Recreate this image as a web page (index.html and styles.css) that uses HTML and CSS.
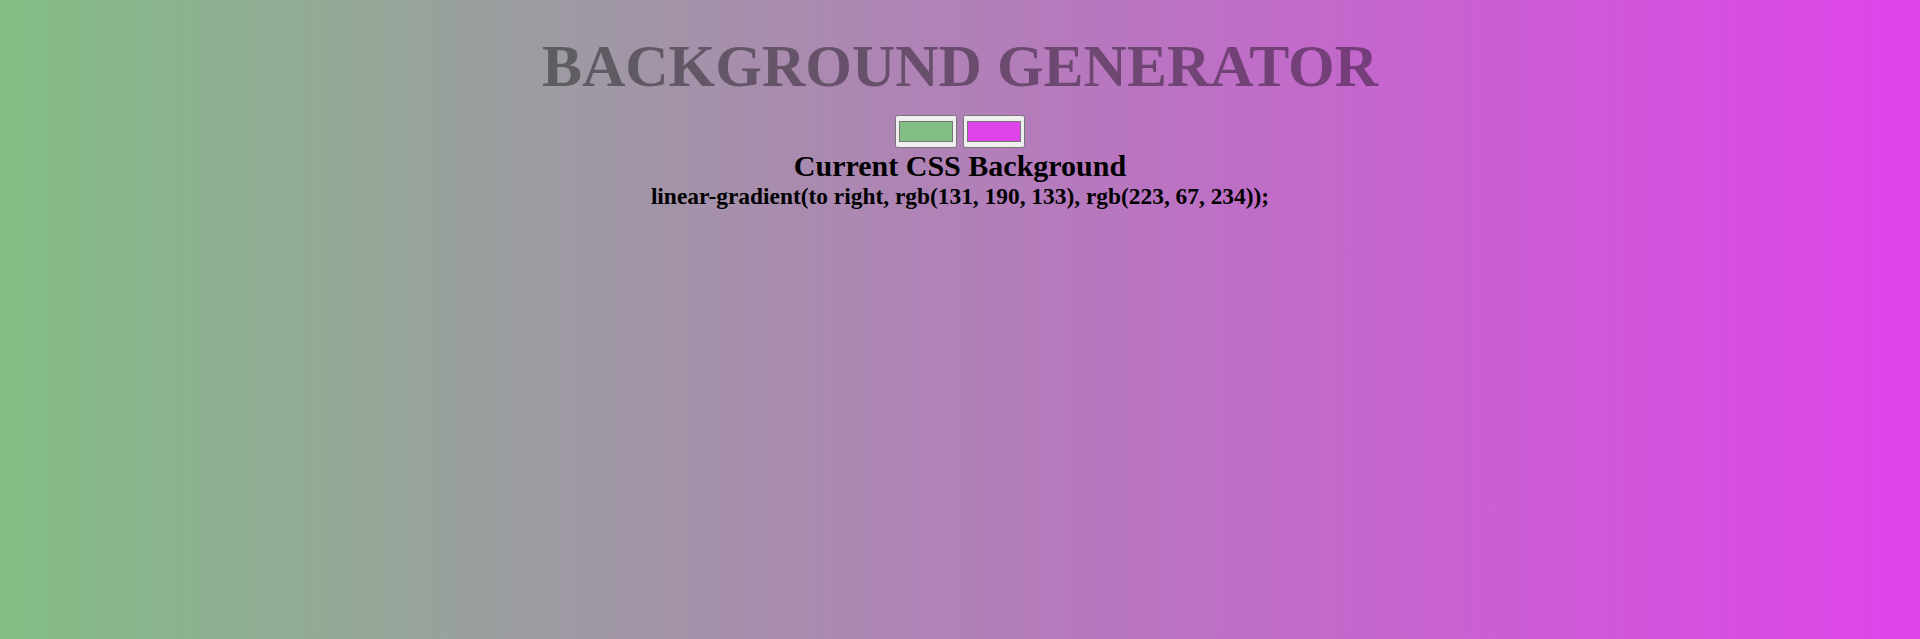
FILE: index.html
```html
<!DOCTYPE html>
<html lang="en">
<head>
<meta charset="utf-8">
<title>Background Generator</title>
<link rel="stylesheet" href="styles.css">
</head>
<body>
  <h1 class="title">BACKGROUND GENERATOR</h1>
  <div class="pickers">
    <input class="color1" type="color" name="color1" value="#83be85">
    <input class="color2" type="color" name="color2" value="#df43ea">
  </div>
  <h2 class="subtitle">Current CSS Background</h2>
  <h3 class="css-text">linear-gradient(to right, rgb(131, 190, 133), rgb(223, 67, 234));</h3>
</body>
</html>
```
FILE: styles.css
```css
html, body {
  margin: 0;
  padding: 0;
}
body {
  min-height: 100vh;
  background: linear-gradient(to right, rgb(131, 190, 133), rgb(223, 67, 234));
  font-family: "Liberation Serif", "Times New Roman", serif;
  text-align: center;
  display: flex;
  flex-direction: column;
  align-items: center;
}
.title {
  font-size: 60px;
  font-weight: bold;
  color: rgba(0, 0, 0, 0.4);
  margin: 31.5px 0 14.5px;
  line-height: normal;
}
.pickers {
  display: flex;
  gap: 6px;
  justify-content: center;
}
.pickers input {
  width: 62px;
  height: 33px;
  margin: 0;
  padding: 1px;
  box-sizing: border-box;
}
.subtitle {
  font-size: 30px;
  font-weight: bold;
  margin: 0.5px 0 0;
  line-height: normal;
}
.css-text {
  font-size: 23.4px;
  font-weight: bold;
  margin: 0;
  line-height: normal;
}
```
